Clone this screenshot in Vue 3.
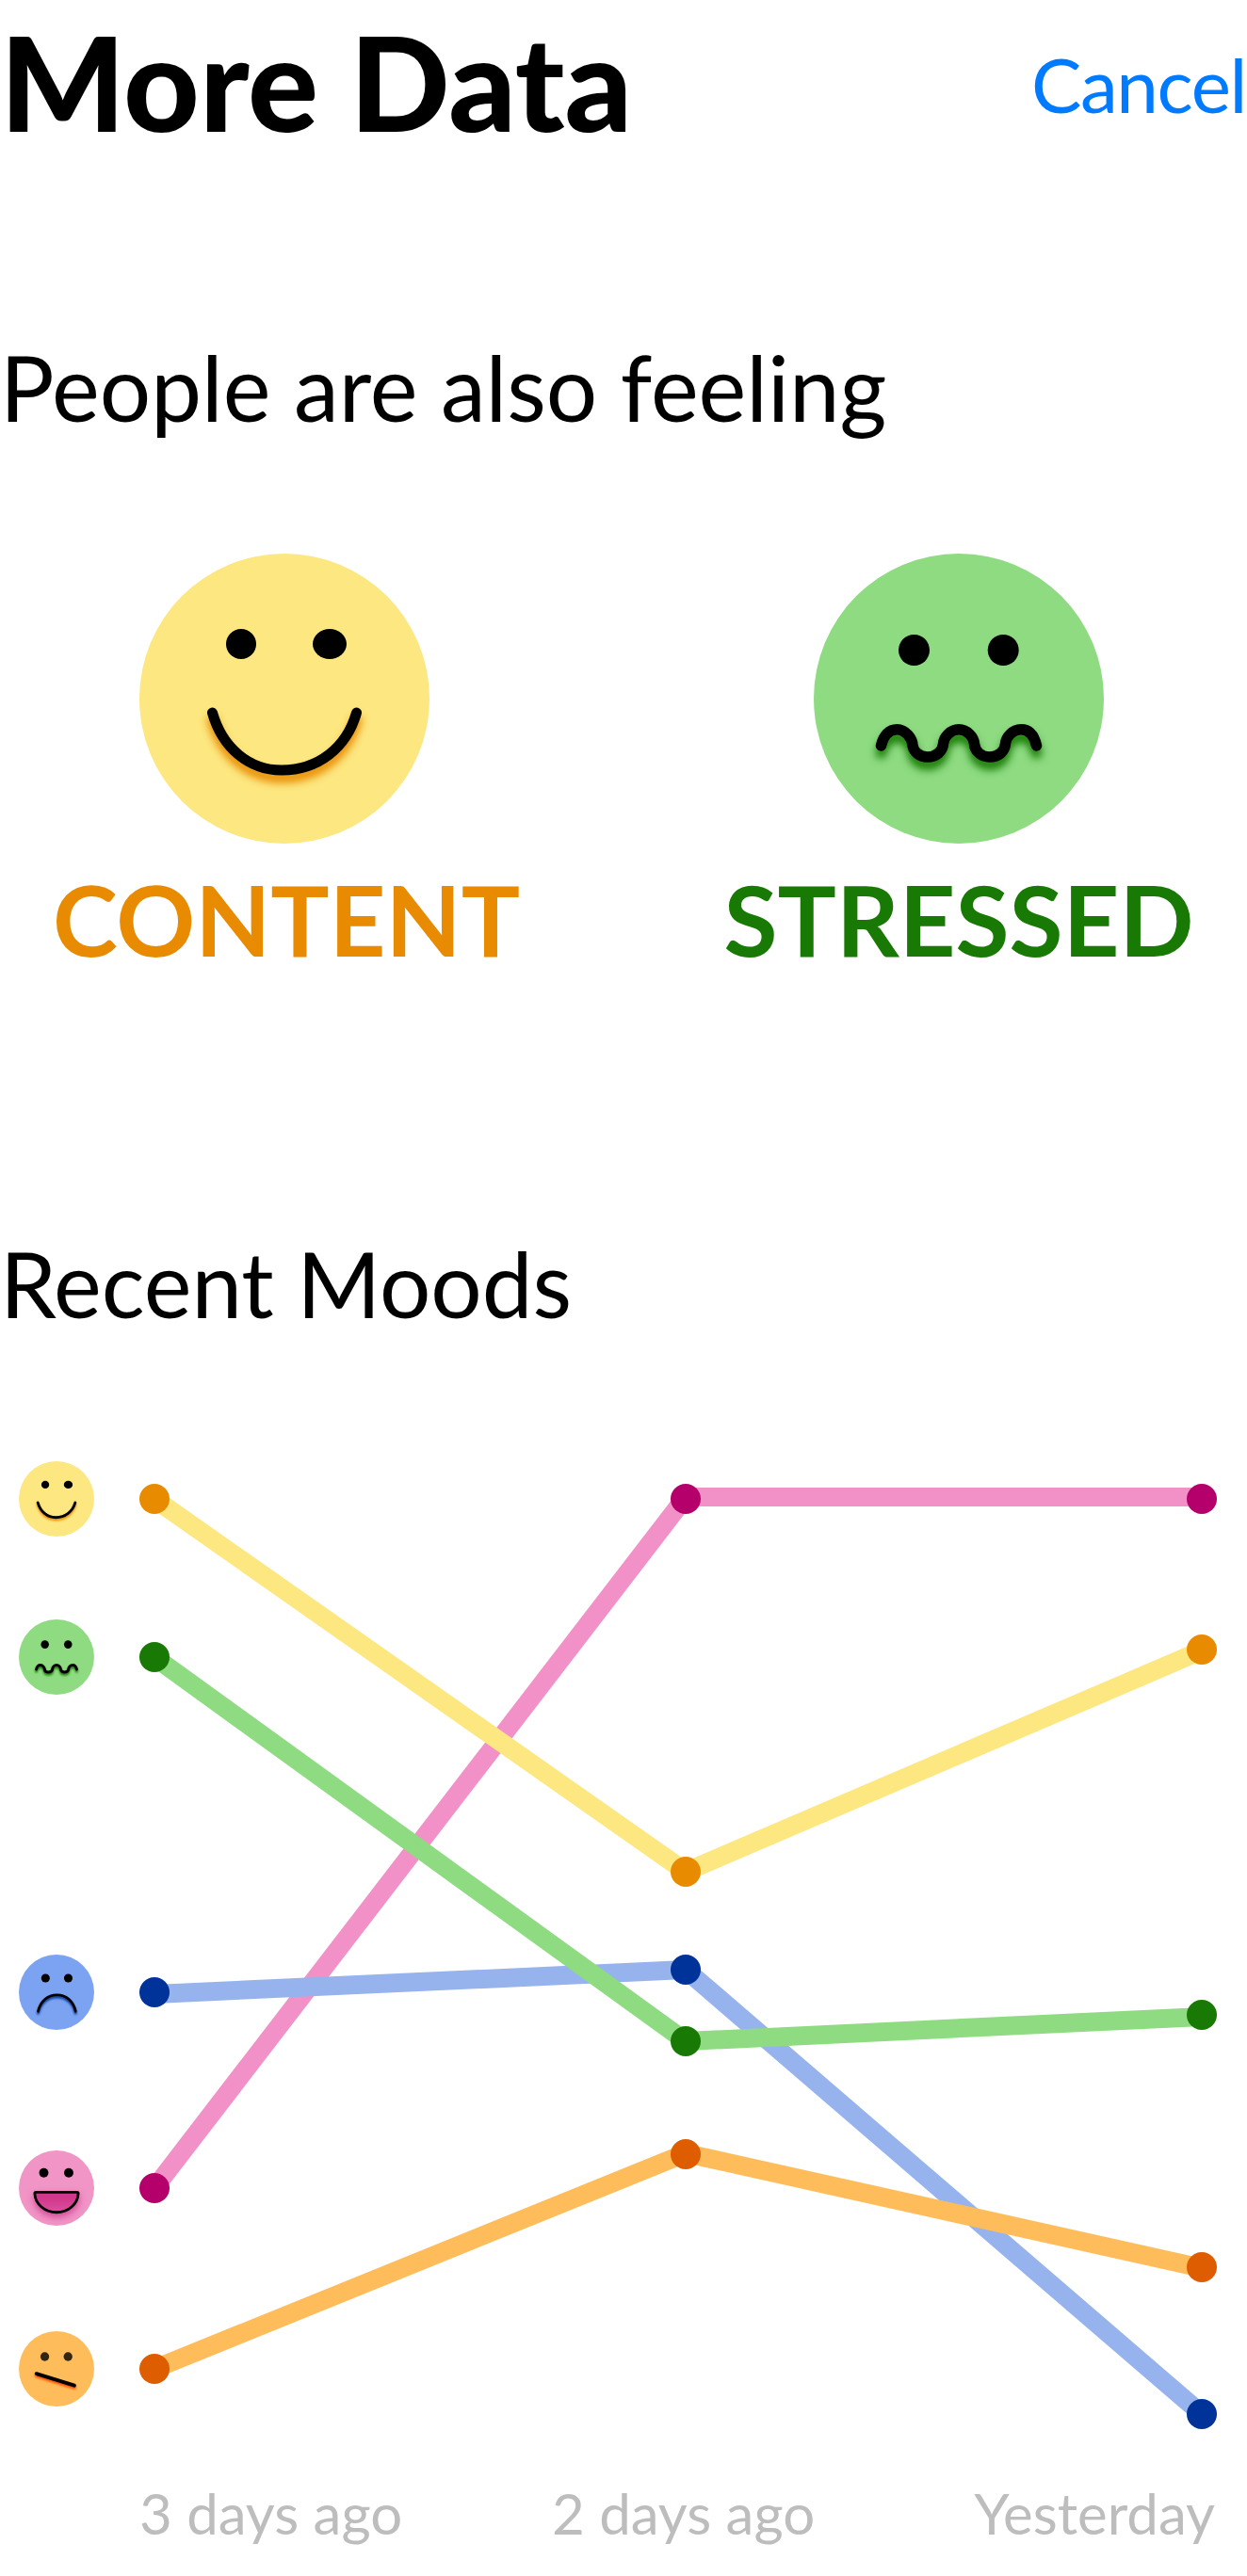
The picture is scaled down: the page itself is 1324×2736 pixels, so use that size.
<script setup>
import { h } from 'vue'

const faces = {
  content: {
    fill: '#fde780', shade: '#e88b00',
    eyes: [[-46, -58, 16, 16], [48, -58, 18, 16]],
    mouth: 'M-76.5 15C-66 52-38 76-3 76C36 76 66 52 76.5 15', width: 11
  },
  stressed: {
    fill: '#8edb82', shade: '#187a04',
    eyes: [[-47.5, -51.5, 16.5, 16.5], [47.2, -51.5, 16.5, 16.5]],
    mouth: 'M-82.5 50C-80 39-74 32.7-65.5 32.7C-57 32.7-49 42-49 50C-48 56-42 62-33.5 62C-24 62-17 56-16.5 48C-16 41-9 32.7 0 32.7C9 32.7 16 41 16.5 48C17 56 24 62 32.7 62C42 62 49 56 49.5 48C50 41 57 32.7 66 32.7C75 32.7 80 39 82.5 50', width: 11.5
  },
  sad: {
    fill: '#7ba3f1', shade: '#003399',
    eyes: [[-45, -58, 17.5, 17.5], [48, -58, 17.5, 17.5]],
    mouth: 'M-75 78C-66 36-36 11 2 11C40 11 69 36 78 78', width: 11
  },
  happy: {
    fill: '#f194c6', shade: '#b5006c',
    eyes: [[-52, -62.5, 19, 19], [50, -62.5, 19, 19]],
    mouth: 'M-84 17H84Q89 17 89 22C87 66 48 99 0 99C-48 99-87 66-89 22Q-89 17-84 17Z', width: 11, open: true
  },
  unsure: {
    fill: '#ffbc5a', shade: '#ff4d00', eyeOpacity: 0.8,
    eyes: [[-48, -50, 18, 18], [47, -50, 18, 18]],
    mouth: 'M-82 20L73 68', width: 15
  }
}

const MoodFace = (props) => {
  const f = faces[props.mood]
  const id = `shade-${props.mood}-${props.size}`
  return h('svg', { width: props.size, height: props.size, viewBox: '-154 -154 308 308', overflow: 'visible', style: 'display:block' }, [
    h('defs', [
      h('filter', { id, x: '-40%', y: '-60%', width: '180%', height: '260%', 'color-interpolation-filters': 'sRGB' }, [
        h('feDropShadow', { dx: 0, dy: f.open ? 15 : 8, stdDeviation: f.open ? 15 : 4, 'flood-color': f.shade, 'flood-opacity': f.open ? 0.5 : 1 })
      ]),
      h('linearGradient', { id: `${id}-tongue`, x1: 0, y1: 0, x2: 0, y2: 1 }, [
        h('stop', { offset: '0.3', 'stop-color': '#d1388c' }),
        h('stop', { offset: '1', 'stop-color': '#dc509f' })
      ])
    ]),
    h('circle', { r: 154, fill: f.fill }),
    ...f.eyes.map(([cx, cy, rx, ry]) => h('ellipse', { cx, cy, rx, ry, fill: '#000', 'fill-opacity': f.eyeOpacity || 1 })),
    h('path', {
      d: f.mouth, fill: f.open ? `url(#${id}-tongue)` : 'none', stroke: '#000', 'stroke-width': f.width,
      'stroke-linecap': 'round', 'stroke-linejoin': 'round', filter: `url(#${id})`
    })
  ])
}
MoodFace.props = ['mood', 'size']

const feelings = [
  { mood: 'content', label: 'CONTENT' },
  { mood: 'stressed', label: 'STRESSED' }
]

const columns = [44, 608, 1156]
const series = [
  { mood: 'happy', line: '#f291c7', dot: '#b5006c', y: [772, 40, 40], path: [772, 38, 38] },
  { mood: 'sad', line: '#96b3ed', dot: '#003399', y: [564, 540, 1012], path: [566, 540, 1012] },
  { mood: 'content', line: '#fde780', dot: '#e88b00', y: [40, 436, 200], path: [40, 436, 201] },
  { mood: 'stressed', line: '#8edb82', dot: '#187a04', y: [208, 616, 588], path: [208, 616, 590] },
  { mood: 'unsure', line: '#ffbc5a', dot: '#de5d00', y: [964, 736, 856], path: [964, 735, 857] }
]
const legend = [
  { mood: 'content', gap: 0 },
  { mood: 'stressed', gap: 88 },
  { mood: 'sad', gap: 276 },
  { mood: 'happy', gap: 128 },
  { mood: 'unsure', gap: 112 }
]
const segments = (s) => [0, 1].map((i) => ({ x1: columns[i], y1: s.path[i], x2: columns[i + 1], y2: s.path[i + 1] }))
</script>

<template>
  <main class="page">
    <header class="header">
      <h1>More Data</h1>
      <a class="cancel">Cancel</a>
    </header>

    <section class="feelings">
      <h2>People are also feeling</h2>
      <div class="feeling-row">
        <div v-for="f in feelings" :key="f.mood" class="feeling" :class="f.mood">
          <MoodFace :mood="f.mood" :size="308" />
          <span class="label">{{ f.label }}</span>
        </div>
      </div>
    </section>

    <section class="recent">
      <h2>Recent Moods</h2>
      <div class="chart">
        <div class="legend">
          <MoodFace v-for="l in legend" :key="l.mood" :mood="l.mood" :size="80" :style="{ marginTop: l.gap + 'px' }" />
        </div>
        <svg class="plot" width="1204" height="1052" viewBox="0 0 1204 1052">
          <g v-for="s in series" :key="s.mood">
            <line v-for="(g, i) in segments(s)" :key="i" v-bind="g" :stroke="s.line" stroke-width="20" />
          </g>
          <g v-for="s in series" :key="s.mood + '-dots'">
            <circle v-for="(y, i) in s.y" :key="i" :cx="columns[i]" :cy="y" r="16" :fill="s.dot" />
          </g>
        </svg>
      </div>
      <div class="axis">
        <span>3 days ago</span>
        <span>2 days ago</span>
        <span class="last">Yesterday</span>
      </div>
    </section>
  </main>
</template>

<style>
body {
  margin: 0;
  background: #fff;
}
</style>

<style scoped>
.page {
  width: 1324px;
  height: 2736px;
  overflow: hidden;
  background: #fff;
  color: #000;
  font-family: Lato, sans-serif;
}
.header {
  display: flex;
  justify-content: space-between;
  align-items: flex-start;
  height: 353px;
}
h1 {
  margin: 1px 0 0;
  font-size: 140px;
  line-height: 170px;
  font-weight: 900;
  white-space: nowrap;
}
.cancel {
  margin-top: 41px;
  padding-right: 1px;
  font-size: 80px;
  line-height: 96px;
  letter-spacing: -1.4px;
  color: #007aff;
}
h2 {
  margin: 0;
  font-size: 96px;
  line-height: 116px;
  font-weight: 400;
  white-space: nowrap;
}
.feelings {
  height: 952px;
}
.feeling-row {
  display: flex;
  gap: 112px;
  padding-top: 119px;
}
.feeling {
  display: flex;
  flex-direction: column;
  align-items: center;
  width: 604px;
}
.label {
  margin-top: 17px;
  font-size: 104px;
  line-height: 125px;
  font-weight: 700;
}
.content .label {
  padding-left: 4px;
  color: #e88b00;
}
.stressed .label {
  color: #187a04;
}
.chart {
  display: flex;
  height: 1052px;
  margin-top: 131px;
}
.legend {
  width: 100px;
  padding-left: 20px;
}
.plot {
  display: block;
}
.axis {
  display: flex;
  padding: 29px 34px 0 148px;
  font-size: 60px;
  line-height: 72px;
  color: #bdbdbd;
}
.axis span {
  width: 438px;
}
.axis .last {
  width: auto;
  margin-left: auto;
}
</style>
